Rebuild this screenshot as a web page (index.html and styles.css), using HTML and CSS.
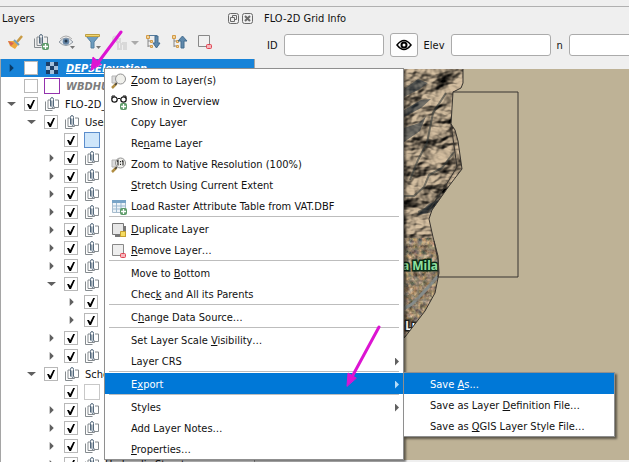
FILE: index.html
```html
<!DOCTYPE html>
<html lang="en">
<head>
    <meta charset="UTF-8">
    <meta name="viewport" content="width=device-width, initial-scale=1.0">
    <title>QGIS Layers</title>
    <link rel="stylesheet" href="styles.css">
</head>
<body>
<svg class="defs" aria-hidden="true">
    <symbol id="group" viewBox="0 0 14 14">
        <path d="M.5 4.500v9h7M3 11.500v-8.500h2M3 11.500h6.500v-2M10 3h3.500v7.500h-4" fill="none" stroke="#858b8f"/>
        <path d="M5.500 9.500v-7q0-2 1.500-2t1.500 2v7q0 1-.8 1t-.8-1v-6" fill="none" stroke="#53687c"/>
    </symbol>
    <symbol id="plus" viewBox="0 0 7 7">
        <rect width="7" height="7" rx="2" fill="#5c9b68"/>
        <path d="M3.500 1v5M1 3.500h5" stroke="#fff" stroke-width="1.300"/>
    </symbol>
    <symbol id="minus" viewBox="0 0 6 5">
        <rect x=".5" y=".5" width="5" height="4" rx="1" fill="#f6b5bb" stroke="#df4453"/>
    </symbol>
    <symbol id="lens" viewBox="0 0 16 16">
        <path d="M1 3h5v7H1z" fill="#dcdcdc" stroke="#b5b5b5"/>
        <path d="M5.500 10.500 1 15" stroke="#b18e42" stroke-width="2.500"/>
        <path d="M6 10l-2 2" stroke="#444" stroke-width="1.500"/>
        <circle cx="9.500" cy="6" r="5" fill="#eeeeea" fill-opacity=".9" stroke="#929292"/>
    </symbol>
</svg>

<div class="toolbar-edge"></div>
<main class="workspace">
    <section class="layers">
        <div class="dock-title">
            <span>Layers</span>
            <button class="dock-button" aria-label="Float panel">
                <svg viewBox="0 0 11 11"><rect x=".5" y=".5" width="10" height="10" rx="2"/><path d="M4.500 4V2.500h4v4H7M2.500 4.500h4v4h-4z"/></svg>
            </button>
            <button class="dock-button" aria-label="Close panel">
                <svg viewBox="0 0 11 11"><rect x=".5" y=".5" width="10" height="10" rx="2"/><path d="M3 3l5 5M8 3L3 8" stroke-width="2"/></svg>
            </button>
        </div>
        <div class="tools">
            <button aria-label="Layer styling">
                <svg viewBox="0 0 18 18"><path d="M11 9l5-6" stroke="#c99b45" stroke-width="2.500"/><path d="M2 8l6 0 4 4-3 4-5-3z" fill="#eda83d"/><path d="M2 8l6 2-3 3z" fill="#d76555"/><path d="M8 7l5 5" stroke="#769db5" stroke-width="2"/></svg>
            </button>
            <button aria-label="Add group">
                <svg viewBox="0 0 18 18"><use href="#group" x="2" y="1" width="14" height="14"/><use href="#plus" x="10" y="10" width="7" height="7"/></svg>
            </button>
            <button aria-label="Manage map themes">
                <svg viewBox="0 0 18 18"><path d="M1 9q7-8 14 0-7 7-14 0z" fill="#e5e9ed" stroke="#929aa3"/><path d="M2 6q6-6 12 0" fill="none" stroke="#aaa"/><circle cx="8" cy="8.500" r="3.300" fill="#6585a6"/><circle cx="8" cy="8" r="1.500" fill="#26394c"/><path d="M12 13h5l-2.500 3z" fill="#777"/></svg>
            </button>
            <button aria-label="Filter legend">
                <svg viewBox="0 0 18 18"><path d="M2 3h13L10 9v6H7V9z" fill="#6d9dc0" stroke="#557f9e"/><path d="M1.500 1.500h14v2h-14z" fill="#f2d76d" stroke="#bd9e43"/><path d="M12 13h5l-2.500 3z" fill="#777"/></svg>
            </button>
            <button aria-label="Filter by expression" disabled>
                <svg viewBox="0 0 18 18"><path d="M3 8q-1-6 5-4M7 6h3v3H7zM8 10v6h3v-5h3v5h2v-6h-4" fill="none" stroke="#d9d9d9" stroke-width="2"/></svg>
            </button>
            <button class="drop" aria-label="Expression options">
                <svg viewBox="0 0 8 18"><path d="M0 8h8l-4 4z" fill="#aaa"/></svg>
            </button>
            <button aria-label="Expand all">
                <svg viewBox="0 0 18 18"><path d="M4 4v10M4 8h4M4 13h4" stroke="#888"/><path d="M2.500 2.500h3v3h-3zM6.500 7.500h2v2h-2zM6.500 12.500h2v2h-2z" fill="#f2d49b" stroke="#d39b48"/><path d="M5 2.500h8" stroke="#557b9c"/><path d="M11 3h3v7h2l-3.500 5L9 10h2z" fill="#5f89ac" stroke="#446c8f"/></svg>
            </button>
            <button aria-label="Collapse all">
                <svg viewBox="0 0 18 18"><path d="M4 4v10M4 8h4M4 13h4" stroke="#888"/><path d="M2.500 2.500h3v3h-3zM6.500 7.500h2v2h-2zM6.500 12.500h2v2h-2z" fill="#f2d49b" stroke="#d39b48"/><path d="M11 15h3V8h3l-4.500-5L8 8h3z" fill="#5f89ac" stroke="#446c8f"/></svg>
            </button>
            <button aria-label="Remove layer">
                <svg viewBox="0 0 18 18"><path d="M2.500 2.500h11v11h-11z" fill="#f1f1f1" stroke="#888"/><use href="#minus" x="10" y="11" width="6" height="5"/></svg>
            </button>
        </div>
        <ul class="tree" id="tree"></ul>
    </section>

    <section class="grid-info">
        <div class="dock-title"><span>FLO-2D Grid Info</span></div>
        <div class="fields">
            <label for="cell-id">ID</label>
            <input id="cell-id" type="text">
            <button class="eye" aria-label="Show cell">
                <svg viewBox="0 0 16 12"><path d="M1 6q7-9 14 0-7 9-14 0z" fill="#fff" stroke="#000" stroke-width="1.500"/><circle cx="8" cy="6" r="2.500" fill="#fff" stroke="#000" stroke-width="2"/></svg>
            </button>
            <label for="elev">Elev</label>
            <input id="elev" type="text">
            <label for="manning">n</label>
            <input id="manning" type="text">
        </div>
        <div class="map">
            <svg viewBox="262 69 367 391" preserveAspectRatio="xMinYMin slice">
                <defs>
                    <filter id="hills" x="0" y="0" width="100%" height="100%" color-interpolation-filters="sRGB">
                        <feTurbulence type="fractalNoise" baseFrequency=".03 .045" numOctaves="4" seed="8" result="noise"/>
                        <feDiffuseLighting in="noise" surfaceScale="12" diffuseConstant="1.100" lighting-color="#c4b094">
                            <feDistantLight azimuth="225" elevation="52"/>
                        </feDiffuseLighting>
                    </filter>
                    <filter id="streets" x="0" y="0" width="100%" height="100%" color-interpolation-filters="sRGB">
                        <feTurbulence type="fractalNoise" baseFrequency=".22" numOctaves="3" seed="4"/>
                        <feColorMatrix values=".9 0 0 0 .13  .7 .2 0 0 .06  .5 .2 .2 0 -.04  0 0 0 0 1"/>
                    </filter>
                    <clipPath id="basin"><path d="M262 69h201v14l-2 5-8 4-2 32 4 6 3 11 4 28-13 17-17 24-3 9 4 18 5 19 1 17-4 20-10 18-20 26-38 34H262z"/></clipPath>
                </defs>
                <g clip-path="url(#basin)">
                    <path d="M262 69h220v170H262z" filter="url(#hills)"/>
                    <path d="M262 238h220v150H262z" filter="url(#streets)"/>
                    <g class="ridges">
                        <path d="M404 89l14-10 10 4-8 6-16 8zM404 110l17-10 10-1-10 9-17 9zM404 128l15-5 7-7-6 15-16 11z"/>
                        <path d="M429 204l13-6 12-15-9 20-16 10-12 2z"/>
                    </g>
                    <path class="gullies" d="M404 196h10l10-9 5-12 13-7 12-16M410 180l8-20 9-17 6-30 13-20M418 212l13-5 10-14"/>
                    <path class="road" d="M402 310l10-6 11-11 15-17"/>
                    <path class="avenues" d="M405 240v82M418 240v68M430 243v47M404 249h29M404 281h33M404 300h27"/>
                    <text class="town" x="402" y="270">a Mila</text>
                    <text class="city" x="405" y="330">Lu</text>
                </g>
                <path class="outline" d="M463 69v14l-2 5-8 4-2 32 4 6 3 11 4 28-13 17-17 24-3 9 4 18 5 19 1 17-4 20-10 18-20 26-38 34"/>
                <path class="outline" d="M451 124l6 43-11 18-19 28M453 92h65v185h-80V260l-4-19"/>
            </svg>
        </div>
    </section>

    <ul class="menu">
        <li><button><svg viewBox="0 0 16 16"><use href="#lens"/></svg><span><u>Z</u>oom to Layer(s)</span></button></li>
        <li><button><svg viewBox="0 0 16 16"><path d="M1 5V2h3M15 5V2h-3M6.500 5q1.500-1.500 3 0" fill="none" stroke="#111"/><circle cx="3.500" cy="5.500" r="2.700" fill="#fff" stroke="#111" stroke-width="1.200"/><circle cx="12.500" cy="5.500" r="2.700" fill="#fff" stroke="#111" stroke-width="1.200"/><use href="#plus" x="9" y="9" width="7" height="7"/></svg><span>Show in <u>O</u>verview</span></button></li>
        <li><button><i></i><span>Copy Layer</span></button></li>
        <li><button><i></i><span>Re<u>n</u>ame Layer</span></button></li>
        <li><button><svg viewBox="0 0 16 16"><use href="#lens"/><path d="M6 4.500l1-1v5M12 3.500v5M9.500 4v1.200M9.500 6.800V8M11 4.500l1-1" fill="none" stroke="#222" stroke-width="1.100"/></svg><span>Zoom to Nat<u>i</u>ve Resolution (100%)</span></button></li>
        <li><button><i></i><span><u>S</u>tretch Using Current Extent</span></button></li>
        <li><button><svg viewBox="0 0 16 16"><path d="M1.500 1.500h13v12h-13z" fill="#edf3f8" stroke="#a7bccd"/><path d="M1 1h14v3H1z" fill="#78a4c7"/><path d="M2 7h12M2 10h12M5.500 4v9M10 4v9" stroke="#9bb9d0"/><use href="#plus" x="9" y="9" width="7" height="7"/></svg><span>Load Raster Attribute Table from VAT.DBF</span></button></li>
        <li class="line"></li>
        <li><button><svg viewBox="0 0 16 16"><path d="M4 4h11v11H4z" fill="#777"/><path d="M1.500 1.500h11v11h-11z" fill="#e7e7e7" stroke="#777"/><path d="M9.500 9.500h5v5h-5z" fill="#f5dc62" stroke="#c7a12e"/></svg><span><u>D</u>uplicate Layer</span></button></li>
        <li><button><svg viewBox="0 0 16 16"><path d="M1.500 1.500h11v11h-11z" fill="#eee" stroke="#888"/><use href="#minus" x="9" y="10" width="6" height="5"/></svg><span><u>R</u>emove Layer…</span></button></li>
        <li class="line"></li>
        <li><button><i></i><span>Move to <u>B</u>ottom</span></button></li>
        <li><button><i></i><span>Chec<u>k</u> and All its Parents</span></button></li>
        <li class="line"></li>
        <li><button><i></i><span>C<u>h</u>ange Data Source…</span></button></li>
        <li class="line"></li>
        <li><button><i></i><span>Set Layer Scale <u>V</u>isibility…</span></button></li>
        <li><button class="more"><i></i><span>Layer CRS</span></button></li>
        <li class="line"></li>
        <li class="open">
            <button class="more active"><i></i><span>E<u>x</u>port</span></button>
            <ul class="menu submenu">
                <li><button class="active"><span>Save <u>A</u>s...</span></button></li>
                <li><button><span>Save as Layer <u>D</u>efinition File…</span></button></li>
                <li><button><span>Save as <u>Q</u>GIS Layer Style File…</span></button></li>
            </ul>
        </li>
        <li class="line"></li>
        <li><button class="more"><i></i><span>Styles</span></button></li>
        <li><button><i></i><span>Add Layer Notes…</span></button></li>
        <li><button><i></i><span><u>P</u>roperties…</span></button></li>
    </ul>

    <svg class="pointers" aria-hidden="true">
        <path d="M121 25L97 57M379 320L353 368"/>
        <path class="head" d="M91 63l2-13 8 7zM347 379l1-13 8 5z"/>
    </svg>
</main>

<script>
    // level, arrow, checked, icon, label
    const rows = [
        [0, 'right', false, 'raster', 'DEP3Elevation'],
        [0, '', false, 'polygon', 'WBDHU8'],
        [0, 'down', true, 'group', 'FLO-2D_1'],
        [1, 'down', true, 'group', 'User'],
        [2, '', true, 'blue', ''],
        [2, 'right', true, 'group', ''],
        [2, 'right', true, 'group', ''],
        [2, 'right', true, 'group', ''],
        [2, 'right', true, 'group', ''],
        [2, 'right', true, 'group', ''],
        [2, 'right', true, 'group', ''],
        [2, 'right', true, 'group', ''],
        [2, 'down', true, 'group', ''],
        [3, 'right', true, '', ''],
        [3, 'right', true, '', ''],
        [2, 'right', true, 'group', ''],
        [2, 'right', true, 'group', ''],
        [1, 'down', true, 'group', 'Schema'],
        [2, '', true, 'white', ''],
        [2, 'right', true, 'group', ''],
        [2, 'right', true, 'group', ''],
        [2, 'right', true, 'group', ''],
        [2, 'right', true, 'group', 'Hydraulic Structures']
    ];

    const tree = document.getElementById('tree');
    rows.forEach(([level, arrow, checked, icon, label], i) => {
        const picture = icon === 'group'
            ? '<svg class="icon" viewBox="0 0 14 14"><use href="#group"/></svg>'
            : `<span class="icon ${icon}"></span>`;
        tree.innerHTML += `<li class="row level-${level} ${icon}-row">
            <span class="arrow ${arrow}"></span>
            <input type="checkbox" id="layer-${i}" aria-label="${label || 'Layer'}" ${checked ? 'checked' : ''}>
            ${picture}
            <label for="layer-${i}">${label}</label>
        </li>`;
    });
</script>
</body>
</html>
```

FILE: styles.css
```css
* {
    box-sizing: border-box;
}
body {
    margin: 0;
    height: 100vh;
    display: flex;
    flex-direction: column;
    overflow: hidden;
    background-color: #efefef;
    color: #111;
    font-family: "DejaVu Sans Condensed", "Noto Sans", sans-serif;
    font-size: 11px;
}
button, input {
    font: inherit;
    color: inherit;
    margin: 0;
    padding: 0;
}
ul {
    list-style: none;
    margin: 0;
    padding: 0;
}
u {
    text-underline-offset: 1px;
    text-decoration-skip-ink: none;
}
.defs {
    display: none;
}
.toolbar-edge {
    height: 7px;
    flex-shrink: 0;
    border-bottom: 1px solid #b0b0b0;
}
.workspace {
    position: relative;
    flex: 1;
    min-height: 0;
    display: flex;
    gap: 7px;
}

/* Layers dock */
.layers {
    width: 255px;
    flex-shrink: 0;
    display: flex;
    flex-direction: column;
    min-height: 0;
}
.dock-title {
    height: 22px;
    flex-shrink: 0;
    display: flex;
    align-items: center;
    gap: 3px;
    padding: 0 2px;
}
.dock-title span {
    flex: 1;
}
.dock-button {
    width: 11px;
    height: 11px;
    border: none;
    background: none;
}
.dock-button svg {
    display: block;
    fill: none;
    stroke: #6b6b6b;
}
.tools {
    height: 30px;
    flex-shrink: 0;
    display: flex;
    align-items: center;
    gap: 8px;
    padding: 0 6px 5px;
}
.tools button {
    width: 18px;
    height: 18px;
    border: none;
    background: none;
}
.tools .drop {
    width: 8px;
    margin: 0 -3px 0 -5px;
}
.tools svg {
    display: block;
    height: 18px;
}
.tree {
    flex: 1;
    min-height: 0;
    overflow: hidden;
    background-color: #fff;
    border: 1px solid #a5a5a5;
    border-top: none;
    border-bottom: none;
}
.row {
    height: 18px;
    display: flex;
    align-items: center;
    padding-left: 6px;
    white-space: nowrap;
}
.level-1 { padding-left: 26px; }
.level-2 { padding-left: 46px; }
.level-3 { padding-left: 66px; }
.arrow {
    width: 9px;
    height: 8px;
    margin-right: 8px;
    flex-shrink: 0;
}
.arrow.right {
    background-color: #606060;
    clip-path: polygon(30% 0, 75% 50%, 30% 100%);
}
.arrow.down {
    background-color: #606060;
    clip-path: polygon(0 25%, 100% 25%, 50% 75%);
}
.row input {
    appearance: none;
    width: 14px;
    height: 14px;
    flex-shrink: 0;
    border: 1px solid #b8b8b8;
    background-color: #fff;
}
.row input:checked::after {
    content: "";
    display: block;
    width: 8px;
    height: 9px;
    margin: 2px;
    background-color: #000;
    clip-path: polygon(0 45%, 24% 45%, 40% 68%, 78% 0, 100% 0, 50% 100%, 30% 100%);
}
.icon {
    width: 14px;
    height: 14px;
    margin: 0 6px 0 7px;
    flex-shrink: 0;
}
.icon.raster {
    width: 12px;
    height: 12px;
    margin: 0 8px;
    background: repeating-conic-gradient(#a5c1db 0 25%, #1b3e67 0 50%) 0 0 / 8px 8px;
}
.icon.polygon, .icon.blue, .icon.white {
    width: 16px;
    height: 16px;
    margin: 0 6px;
    border: 1px solid #9332ad;
}
.icon.blue {
    background-color: #cfe6fa;
    border-color: #5b8dcc;
}
.icon.white {
    border-color: #c8c8c8;
}
.raster-row {
    background-color: #1783d8;
    color: #fff;
    font-weight: bold;
    font-style: italic;
    text-decoration: underline;
}
.raster-row .arrow {
    background-color: #0a3a66;
}
.polygon-row {
    color: #7d7d7d;
    font-weight: bold;
    font-style: italic;
}

/* Grid info dock and map */
.grid-info {
    flex: 1;
    min-width: 0;
    display: flex;
    flex-direction: column;
}
.fields {
    height: 40px;
    flex-shrink: 0;
    display: flex;
    align-items: center;
    gap: 6px;
    padding: 0 0 8px 5px;
    overflow: hidden;
}
.fields input {
    width: 100px;
    height: 22px;
    flex-shrink: 0;
    border: 1px solid #ababab;
    border-radius: 3px;
    background-color: #fff;
}
.eye {
    width: 28px;
    height: 24px;
    flex-shrink: 0;
    display: flex;
    align-items: center;
    justify-content: center;
    border: 1px solid #ababab;
    border-radius: 3px;
    background-color: #fdfdfd;
}
.eye svg {
    width: 16px;
    height: 12px;
}
.map {
    flex: 1;
    min-height: 0;
    margin-bottom: 2px;
    overflow: hidden;
    background-color: #beb296;
}
.map svg {
    display: block;
    width: 100%;
    height: 100%;
}
.ridges {
    fill: #24313b;
    opacity: .55;
}
.gullies {
    fill: none;
    stroke: #2e3434;
    stroke-width: 2;
    opacity: .55;
}
.road {
    fill: none;
    stroke: #858b89;
    stroke-width: 3;
}
.avenues {
    fill: none;
    stroke: #81796a;
    opacity: .7;
}
.town, .city {
    font: bold 12px "Noto Sans", sans-serif;
    fill: #8fe0a0;
    stroke: #0b2a16;
    stroke-width: 3px;
    paint-order: stroke;
}
.city {
    fill: #fff;
    stroke: #222;
}
.outline {
    fill: none;
    stroke: #393530;
}

/* Context menu */
.menu {
    position: absolute;
    top: 61px;
    left: 104px;
    width: 300px;
    background-color: #fff;
    border: 1px solid #8f8f8f;
    box-shadow: 2px 2px 2px rgba(0,0,0,0.5);
}
.menu button {
    width: 100%;
    height: 21px;
    display: flex;
    align-items: center;
    gap: 4px;
    padding: 2px 6px 0;
    border: none;
    background: none;
    text-align: left;
    white-space: nowrap;
}
.menu button svg, .menu button i {
    width: 16px;
    height: 16px;
    flex-shrink: 0;
}
.menu button.active {
    background-color: #0078d7;
    color: #fff;
}
.menu .more::after {
    content: "";
    width: 4px;
    height: 8px;
    margin-left: auto;
    margin-right: -2px;
    background-color: #606060;
    clip-path: polygon(0 0, 100% 50%, 0 100%);
}
.menu .more.active::after {
    background-color: #b5dcf8;
}
.line {
    height: 2px;
    margin: 0 4px;
    border-top: 1px solid #bdbdbd;
}
.open {
    position: relative;
}
.menu .submenu {
    top: -1px;
    left: 298px;
    width: 212px;
}
.submenu button {
    padding-left: 26px;
}

/* Marker arrows */
.pointers {
    position: absolute;
    inset: 0;
    width: 100%;
    height: 100%;
    pointer-events: none;
    fill: none;
    stroke: #dc14d2;
    stroke-width: 3;
    stroke-linecap: round;
}
.pointers .head {
    fill: #dc14d2;
    stroke-width: 1;
}
```
